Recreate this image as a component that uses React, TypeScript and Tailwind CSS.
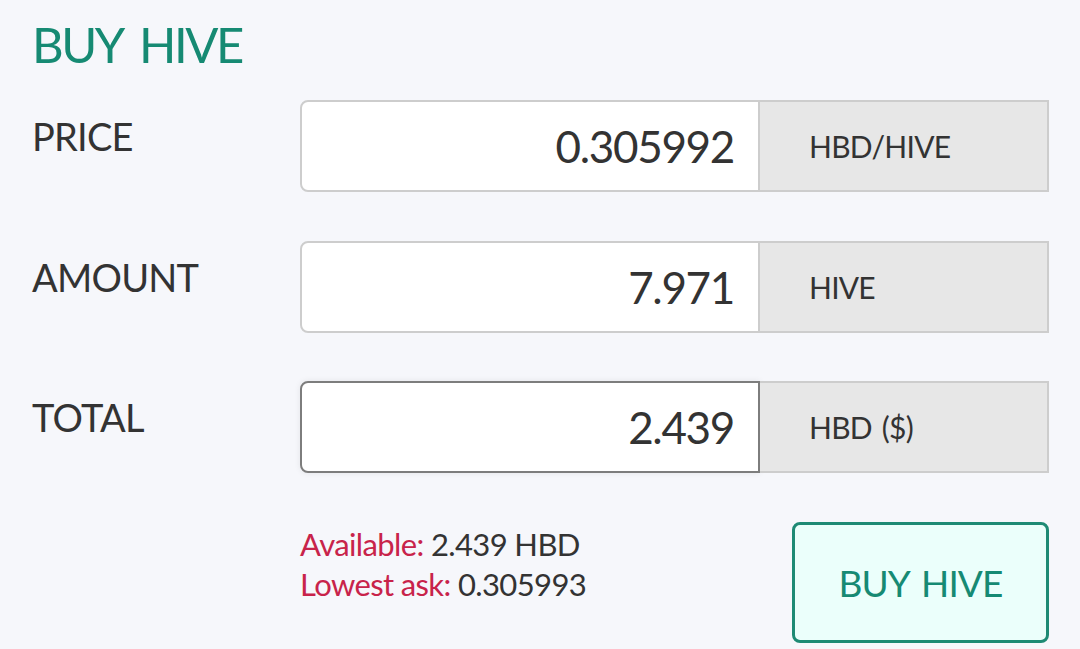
import React from 'react';

const rows = [
    { label: 'PRICE', value: '0.305992', unit: 'HBD/HIVE', focused: false },
    { label: 'AMOUNT', value: '7.971', unit: 'HIVE', focused: false },
    { label: 'TOTAL', value: '2.439', unit: 'HBD ($)', focused: true },
];

const Row = ({ label, value, unit, focused }: { label: string; value: string; unit: string; focused: boolean }) => (
    <div className="flex h-[92px]">
        <div className="w-[268px] pt-[17px] text-[38px] leading-none tracking-[-0.02em] text-[#333333]">{label}</div>
        <div className="flex flex-1">
            <div
                className={`flex w-[460px] items-center justify-end rounded-l-[8px] border-2 bg-white pr-[24px] text-[44px] leading-none tracking-[-0.03em] text-[#333333] ${
                    focused ? 'border-[#7d7d7d] shadow-[0_0_6px_rgba(0,0,0,0.08)]' : 'border-[#cdcdcd]'
                }`}
            >
                {value}
            </div>
            <div className="flex flex-1 items-center border-2 border-l-0 border-[#cdcdcd] bg-[#e7e7e7] pl-[49px] text-[30px] leading-none tracking-[-0.025em] text-[#333333] [word-spacing:3px]">
                {unit}
            </div>
        </div>
    </div>
);

export default function App() {
    return (
        <div className="h-[649px] w-full overflow-hidden bg-[#f6f7fb] pl-[32px] pr-[31px]" style={{ fontFamily: 'Lato, "Noto Sans", sans-serif' }}>
            <h1 className="pt-[20px] text-[49px] leading-none tracking-[-0.05em] text-[#168a73] [word-spacing:8px]">BUY HIVE</h1>

            <div className="mt-[31px] flex flex-col gap-[48.5px]">
                {rows.map((r) => (
                    <Row key={r.label} {...r} />
                ))}
            </div>

            <div className="mt-[49px] flex pl-[268px]">
                <div className="flex-1 pt-[2px] text-[31px] leading-[40px] tracking-[-0.02em]">
                    <div>
                        <span className="text-[#c8234a]">Available:</span> <span className="text-[#333333]">2.439 HBD</span>
                    </div>
                    <div>
                        <span className="text-[#c8234a]">Lowest ask:</span> <span className="text-[#333333]">0.305993</span>
                    </div>
                </div>
                <button className="flex h-[121px] w-[257px] items-center justify-center rounded-[8px] border-[3px] border-[#1e8a74] bg-[#ebfffb] text-[37px] leading-none tracking-[-0.025em] text-[#168a73] [word-spacing:4px]">
                    BUY HIVE
                </button>
            </div>
        </div>
    );
}
